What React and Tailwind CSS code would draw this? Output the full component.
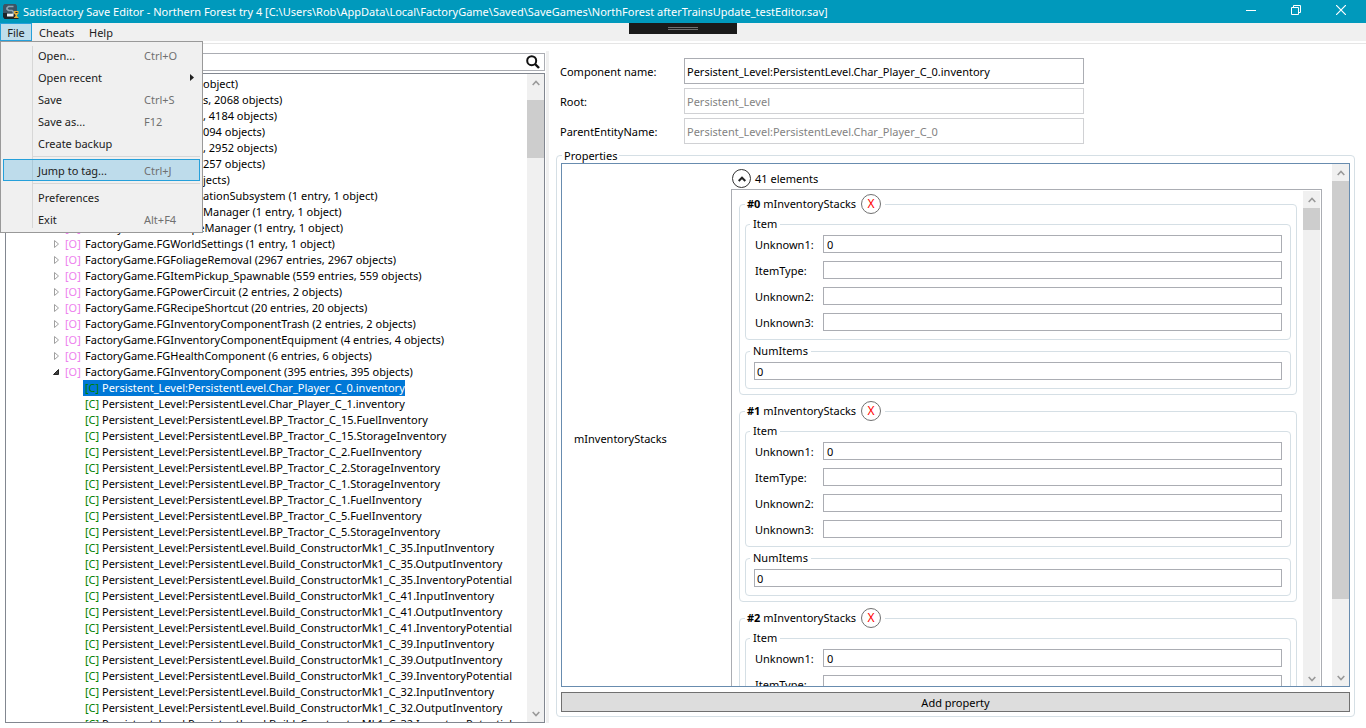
import React, { useState } from 'react';

const objectGroups = [
  'FactoryGame.FGRecipeManager (1 entry, 1 object)',
  'FactoryGame.FGWorldSettings (1 entry, 1 object)',
  'FactoryGame.FGFoliageRemoval (2967 entries, 2967 objects)',
  'FactoryGame.FGItemPickup_Spawnable (559 entries, 559 objects)',
  'FactoryGame.FGPowerCircuit (2 entries, 2 objects)',
  'FactoryGame.FGRecipeShortcut (20 entries, 20 objects)',
  'FactoryGame.FGInventoryComponentTrash (2 entries, 2 objects)',
  'FactoryGame.FGInventoryComponentEquipment (4 entries, 4 objects)',
  'FactoryGame.FGHealthComponent (6 entries, 6 objects)',
  'FactoryGame.FGInventoryComponent (395 entries, 395 objects)',
];

// Rows whose start lies under the open File menu
const coveredRows = [
  'object)',
  's, 2068 objects)',
  ', 4184 objects)',
  '094 objects)',
  ', 2952 objects)',
  '257 objects)',
  'jects)',
  'ationSubsystem (1 entry, 1 object)',
  'Manager (1 entry, 1 object)',
];

const components = [
  'Char_Player_C_0.inventory',
  'Char_Player_C_1.inventory',
  'BP_Tractor_C_15.FuelInventory',
  'BP_Tractor_C_15.StorageInventory',
  'BP_Tractor_C_2.FuelInventory',
  'BP_Tractor_C_2.StorageInventory',
  'BP_Tractor_C_1.StorageInventory',
  'BP_Tractor_C_1.FuelInventory',
  'BP_Tractor_C_5.FuelInventory',
  'BP_Tractor_C_5.StorageInventory',
  'Build_ConstructorMk1_C_35.InputInventory',
  'Build_ConstructorMk1_C_35.OutputInventory',
  'Build_ConstructorMk1_C_35.InventoryPotential',
  'Build_ConstructorMk1_C_41.InputInventory',
  'Build_ConstructorMk1_C_41.OutputInventory',
  'Build_ConstructorMk1_C_41.InventoryPotential',
  'Build_ConstructorMk1_C_39.InputInventory',
  'Build_ConstructorMk1_C_39.OutputInventory',
  'Build_ConstructorMk1_C_39.InventoryPotential',
  'Build_ConstructorMk1_C_32.InputInventory',
  'Build_ConstructorMk1_C_32.OutputInventory',
  'Build_ConstructorMk1_C_32.InventoryPotential',
];

const fileMenu = [
  { label: 'Open...', keys: 'Ctrl+O' },
  { label: 'Open recent', submenu: true },
  { label: 'Save', keys: 'Ctrl+S' },
  { label: 'Save as...', keys: 'F12' },
  { label: 'Create backup' },
  { separator: true },
  { label: 'Jump to tag...', keys: 'Ctrl+J', active: true },
  { separator: true },
  { label: 'Preferences' },
  { label: 'Exit', keys: 'Alt+F4' },
];

function AppIcon() {
  return (
    <svg className="mr-1 h-4 w-4" viewBox="0 0 16 16" aria-hidden="true">
      <path d="M1.500 0h11L14 1.500V10H0V1.500z" fill="#3c5464" />
      <path d="M0 9h14v4l-1.500 2h-11L0 13z" fill="#1d2429" />
      <path d="M10.500 2.500H5.500L4 4v1.200L5.500 6.500h3.500L10.500 8v1L9.500 10H4" fill="none" stroke="#8fa6b3" strokeWidth="1.700" />
      <path d="M4 10h6.500v2.500H4z" fill="#eef2f4" />
      <path d="M11 7h4.500v2.500L14 11v1l1.500 1.500V14H11v-.5l1.500-1.500v-1L11 9.500z" fill="#e9b13a" />
      <path d="M12.500 8h2v1h-2zM12 14h3.500v1H12z" fill="#222" />
    </svg>
  );
}

function TitleBar() {
  return (
    <header className="flex h-[23px] shrink-0 items-center bg-[#0099bc] pr-[3px] pl-[3px] text-white">
      <AppIcon />
      <h1 className="flex-1 truncate leading-4">
        Satisfactory Save Editor - Northern Forest try 4 [C:\Users\Rob\AppData\Local\FactoryGame\Saved\SaveGames\NorthForest afterTrainsUpdate_testEditor.sav]
      </h1>
      <div className="flex h-full items-start">
        <button aria-label="Minimize" className="flex h-5 w-[45px] items-center justify-center">
          <svg className="h-[10px] w-[10px]" viewBox="0 0 10 10"><path d="M0 5.500h10" stroke="#fff" /></svg>
        </button>
        <button aria-label="Restore" className="flex h-5 w-[45px] items-center justify-center">
          <svg className="h-[10px] w-[10px]" viewBox="0 0 10 10" fill="none" stroke="#fff">
            <path d="M0.500 2.500h7v7h-7zM2.500 2.500v-2h7v7h-2" />
          </svg>
        </button>
        <button aria-label="Close" className="flex h-5 w-[45px] items-center justify-center">
          <svg className="h-[10px] w-[10px]" viewBox="0 0 10 10"><path d="M0 0l10 10M10 0L0 10" stroke="#fff" strokeWidth="1.200" /></svg>
        </button>
      </div>
    </header>
  );
}

function FileMenu() {
  return (
    <div role="menu" className="absolute top-full left-0 z-20 w-[203px] border border-[#999] bg-[#f0f0f0] px-[2px] py-[2px]">
      <div className="absolute top-1 bottom-1 left-[31px] w-px bg-[#d7d7d7]" />
      {fileMenu.map((item, i) =>
        item.separator ? (
          <div key={i} role="separator" className="ml-[30px] flex h-[5px] items-center">
            <div className="h-px w-full bg-[#d7d7d7]" />
          </div>
        ) : (
          <button
            key={i}
            role="menuitem"
            className={`relative flex h-[22px] w-[197px] items-center border pt-px pl-[34px] text-left leading-4 text-[#212121] ${
              item.active ? 'border-[#26a0da] bg-[#26a0da]/25' : 'border-transparent'
            }`}
          >
            <span className="w-[106px]">{item.label}</span>
            {item.keys && <span className="text-[#707070]">{item.keys}</span>}
            {item.submenu && (
              <svg className="ml-[46px] h-[7px] w-1" viewBox="0 0 4 7"><path d="M0 0v7l4-3.500z" fill="#212121" /></svg>
            )}
          </button>
        )
      )}
    </div>
  );
}

function MenuBar() {
  return (
    <nav className="relative flex h-[18px] shrink-0 items-center bg-[#f0f0f0] text-[#212121]">
      <button className="h-[18px] w-8 border border-[#26a0da] bg-[#bfddeb] pt-px leading-4">File</button>
      <button className="ml-[7px] w-[50px] pt-px text-left leading-4">Cheats</button>
      <button className="pt-px leading-4">Help</button>
      <div className="absolute top-0 left-[629px] flex h-[11px] w-[108px] flex-col items-center gap-px bg-[#1a1a1a] pt-1">
        <div className="h-px w-[30px] bg-[#707070]" />
        <div className="h-px w-[30px] bg-[#707070]" />
      </div>
      <FileMenu />
    </nav>
  );
}

function ScrollBar({ thumb, size }) {
  return (
    <div className="flex w-[17px] shrink-0 flex-col bg-[#f0f0f0]">
      <button aria-label="Scroll up" className="flex h-[17px] shrink-0 items-center justify-center">
        <svg className="h-[6px] w-2" viewBox="0 0 8 6"><path d="M0.700 5L4 1.500L7.300 5" fill="none" stroke="#999" strokeWidth="1.600" /></svg>
      </button>
      <div className="min-h-0 flex-1">
        <div className={`bg-[#cdcdcd] ${thumb} ${size}`} />
      </div>
      <button aria-label="Scroll down" className="flex h-[17px] shrink-0 items-center justify-center">
        <svg className="h-[6px] w-2" viewBox="0 0 8 6"><path d="M0.700 1L4 4.500L7.300 1" fill="none" stroke="#999" strokeWidth="1.600" /></svg>
      </button>
    </div>
  );
}

function ObjectTree() {
  const [selected, setSelected] = useState(0);

  return (
    <div className="mt-[2px] flex min-h-0 flex-1 border border-[#828790]">
      <ul role="tree" className="min-w-0 flex-1 overflow-hidden pt-[2px] leading-4 whitespace-nowrap">
        {coveredRows.map((text) => (
          <li key={text} role="treeitem" className="h-4 pl-[197px]">{text}</li>
        ))}
        {objectGroups.map((text, i) => {
          const open = i === objectGroups.length - 1;
          return (
            <li key={text} role="treeitem" aria-expanded={open} className="flex h-4 items-center pl-[46px]">
              <svg className="h-[9px] w-[7px]" viewBox="0 0 7 9">
                {open ? (
                  <path d="M6.500 1.500v5h-5z" fill="#404040" stroke="#262626" />
                ) : (
                  <path d="M2.500 0.500v7l4-3.500z" fill="#fff" stroke="#a0a0a0" />
                )}
              </svg>
              <span className="ml-[6px] w-5 text-[#ee82ee]">[O]</span>
              <span>{text}</span>
            </li>
          );
        })}
        {components.map((name, i) => (
          <li key={name} role="treeitem" aria-selected={i === selected} className="flex h-4 pl-[77px]" onClick={() => setSelected(i)}>
            <span className={`flex pl-[2px] ${i === selected ? 'bg-[#0078d7] text-white' : ''}`}>
              <span className="w-[17px] text-[#008000]">[C]</span>
              <span>Persistent_Level:PersistentLevel.{name}</span>
            </span>
          </li>
        ))}
      </ul>
      <ScrollBar thumb="mt-[9px]" size="h-[58px]" />
    </div>
  );
}

function Sidebar() {
  return (
    <aside className="flex w-[540px] shrink-0 flex-col">
      <div className="mt-[2px] flex h-[18px] shrink-0 items-center border border-[#abadb3]">
        <input aria-label="Search" className="h-4 min-w-0 flex-1 px-1 outline-none" />
        <button aria-label="Find" className="mr-1">
          <svg className="h-[14px] w-[14px]" viewBox="0 0 14 14" fill="none" stroke="#111">
            <circle cx="5.700" cy="5.700" r="4.500" strokeWidth="2" />
            <path d="M9 9l4 4" strokeWidth="2.400" />
          </svg>
        </button>
      </div>
      <ObjectTree />
    </aside>
  );
}

function StackField({ id, label, value }) {
  return (
    <div className="flex h-[18px] items-center">
      <label htmlFor={id} className="w-[69px] shrink-0 pt-px pl-px leading-4">{label}</label>
      <input id={id} defaultValue={value} className="h-[18px] min-w-0 flex-1 border border-[#abadb3] px-[3px] outline-none" />
    </div>
  );
}

function InventoryStack({ index }) {
  return (
    <fieldset className="mb-[6px] min-w-0 rounded-[4px] border border-[#d5dfe5] px-[5px] pt-[2px] pb-[5px]">
      <legend className="flex h-5 items-center pr-1 pl-[2px]">
        <span className="leading-4"><b>#{index}</b> mInventoryStacks</span>
        <button aria-label="Remove" className="ml-[5px] h-5 w-5 rounded-full border border-[#707070] text-center text-[12px] leading-[18px] text-[#f00]">X</button>
      </legend>
      <fieldset className="min-w-0 rounded-[4px] border border-[#d5dfe5] px-2 pt-[3px] pb-2">
        <legend className="-ml-1 px-[3px] leading-4">Item</legend>
        <div className="flex flex-col gap-2">
          <StackField id={`u1-${index}`} label="Unknown1:" value="0" />
          <StackField id={`type-${index}`} label="ItemType:" value="" />
          <StackField id={`u2-${index}`} label="Unknown2:" value="" />
          <StackField id={`u3-${index}`} label="Unknown3:" value="" />
        </div>
      </fieldset>
      <fieldset className="mt-[3px] min-w-0 rounded-[4px] border border-[#d5dfe5] px-2 pt-[3px] pb-2">
        <legend className="-ml-1 px-[3px] leading-4">NumItems</legend>
        <input aria-label="NumItems" defaultValue="0" className="block h-[18px] w-full border border-[#abadb3] px-[2px] outline-none" />
      </fieldset>
    </fieldset>
  );
}

function EntityField({ id, label, value, disabled }) {
  return (
    <div className="flex items-center">
      <label htmlFor={id} className="w-[124px] shrink-0 pt-px leading-4">{label}</label>
      <input
        id={id}
        defaultValue={value}
        disabled={disabled}
        className={`h-[26px] w-[400px] border px-[2px] pt-px outline-none ${
          disabled ? 'border-[#d0d1d4] text-[#838383]' : 'border-[#abadb3]'
        }`}
      />
    </div>
  );
}

function Editor() {
  return (
    <main className="flex min-w-0 flex-1 flex-col pr-[11px] pb-[6px] pl-[7px]">
      <div className="mt-[7px] flex flex-col gap-1 pl-1">
        <EntityField id="name" label="Component name:" value="Persistent_Level:PersistentLevel.Char_Player_C_0.inventory" />
        <EntityField id="root" label="Root:" value="Persistent_Level" disabled />
        <EntityField id="parent" label="ParentEntityName:" value="Persistent_Level:PersistentLevel.Char_Player_C_0" disabled />
      </div>
      <fieldset className="mt-1 flex min-h-0 min-w-0 flex-1 flex-col rounded-[4px] border border-[#d5dfe5] px-1 pb-1">
        <legend className="ml-px px-[2px] leading-[15px]">Properties</legend>
        <div className="flex h-full min-h-0 flex-col">
          <div className="flex min-h-0 flex-1 overflow-hidden border border-[#688caf]">
            <div className="flex h-[550px] min-w-0 flex-1 items-center pl-3">
              <span className="w-[157px] shrink-0">mInventoryStacks</span>
              <div className="mr-[10px] flex h-full min-w-0 flex-1 flex-col pt-1">
                <div className="flex h-[21px] shrink-0 items-center">
                  <button aria-label="Collapse" className="ml-px flex h-[19px] w-[19px] items-center justify-center rounded-full border border-[#333]">
                    <svg className="h-[6px] w-2" viewBox="0 0 8 6"><path d="M0.700 5L4 1.700L7.300 5" fill="none" stroke="#222" strokeWidth="2" /></svg>
                  </button>
                  <span className="ml-1 leading-4">41 elements</span>
                </div>
                <div className="flex h-[500px] shrink-0 overflow-hidden border border-[#abadb3] p-px">
                  <div className="min-w-0 flex-1 overflow-hidden pt-[3px] pr-[6px] pl-[6px]">
                    <InventoryStack index={0} />
                    <InventoryStack index={1} />
                    <InventoryStack index={2} />
                  </div>
                  <ScrollBar thumb="mt-0" size="h-[22px]" />
                </div>
              </div>
            </div>
            <ScrollBar thumb="mt-0" size="h-[418px]" />
          </div>
          <button className="mt-[5px] h-5 shrink-0 border border-[#707070] bg-[#ddd] pt-px leading-[18px]">Add property</button>
        </div>
      </fieldset>
    </main>
  );
}

function App() {
  return (
    <div className="flex h-screen flex-col overflow-hidden bg-white font-['Noto_Sans',sans-serif] text-[11px] text-black">
      <TitleBar />
      <MenuBar />
      <div className="mt-[2px] h-px shrink-0 bg-[#e5e5e5]" />
      <div className="mt-[7px] mb-[5px] flex min-h-0 flex-1 pl-[5px]">
        <Sidebar />
        <div className="ml-px w-[3px] shrink-0 bg-[#f0f0f0]" />
        <Editor />
      </div>
    </div>
  );
}

export default App;
